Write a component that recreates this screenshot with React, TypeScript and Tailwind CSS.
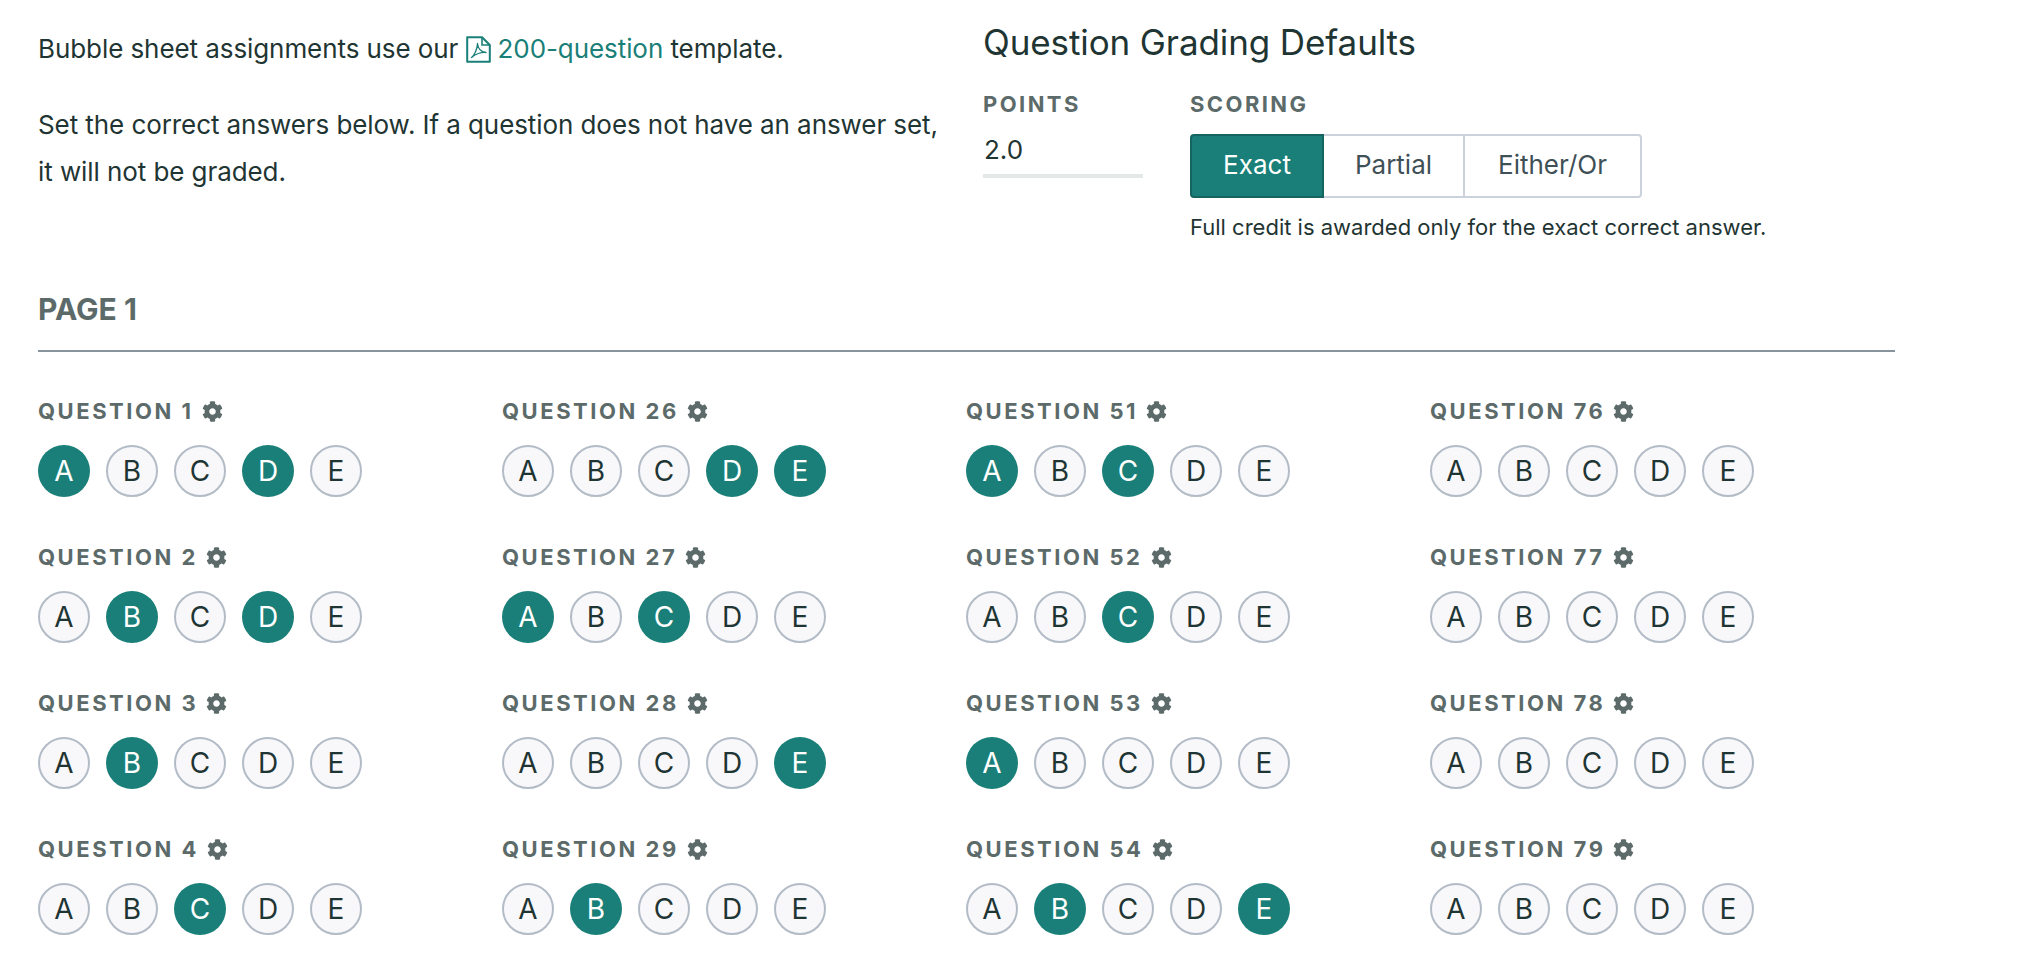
import React from "react";
import { FaCog } from "react-icons/fa";

const choices = ["A", "B", "C", "D", "E"];

const columns = [
  [
    { n: 1, on: "AD" },
    { n: 2, on: "BD" },
    { n: 3, on: "B" },
    { n: 4, on: "C" },
  ],
  [
    { n: 26, on: "DE" },
    { n: 27, on: "AC" },
    { n: 28, on: "E" },
    { n: 29, on: "B" },
  ],
  [
    { n: 51, on: "AC" },
    { n: 52, on: "C" },
    { n: 53, on: "A" },
    { n: 54, on: "BE" },
  ],
  [
    { n: 76, on: "" },
    { n: 77, on: "" },
    { n: 78, on: "" },
    { n: 79, on: "" },
  ],
];

function PdfIcon() {
  return (
    <svg
      viewBox="0 0 25 27"
      className="inline-block w-[25px] h-[27px] align-[-5px] mr-[7px]"
      fill="none"
      stroke="currentColor"
      aria-hidden="true"
    >
      <path d="M1.2 1.2H16L23.8 9V25.8H1.2Z" strokeWidth="2" strokeLinejoin="round" />
      <path d="M16 1.2V9H23.8" strokeWidth="1.6" />
      <path
        d="M5.5 21.5C8 20 11.5 13 11.5 7.5C12 12.5 15 16 20 16.5C15.5 16 9 18 5.5 21.5Z"
        strokeWidth="1.3"
        strokeLinejoin="round"
      />
    </svg>
  );
}

function Question({ n, on }: { n: number; on: string }) {
  return (
    <div className="h-[146px] pt-[1px]">
      <div className="flex items-center h-[24px] text-[22px] font-bold tracking-[0.115em] text-[#5c6b6a]">
        <span>QUESTION {n}</span>
        <FaCog className="w-[21px] h-[21px] ml-[8px]" aria-hidden="true" />
      </div>
      <div className="flex gap-4 mt-[22px]">
        {choices.map((c) =>
          on.includes(c) ? (
            <div
              key={c}
              className="w-[52px] h-[52px] rounded-full bg-[#1a7f78] text-white flex items-center justify-center text-[28px]"
            >
              {c}
            </div>
          ) : (
            <div
              key={c}
              className="w-[52px] h-[52px] rounded-full bg-[#f8f8fb] border-2 border-[#b3bcc6] text-[#1f3533] flex items-center justify-center text-[28px]"
            >
              {c}
            </div>
          )
        )}
      </div>
    </div>
  );
}

export default function App() {
  return (
    <div className="h-[980px] overflow-hidden bg-white pl-[38px] pr-[137px] text-[#1f3533] font-['Inter',sans-serif]">
      <div className="flex h-[283px]">
        <div className="w-[945px] pt-[25px] text-[26px] tracking-[-0.003em] leading-[48px]">
          <p className="h-[48px]">
            Bubble sheet assignments use our{" "}
            <a href="#" className="text-[#1a7f78]">
              <PdfIcon />200-question
            </a>{" "}
            template.
          </p>
          <p className="mt-[28px] leading-[47px] whitespace-nowrap">
            Set the correct answers below. If a question does not have an answer set,
            <br />
            it will not be graded.
          </p>
        </div>
        <div>
          <h2 className="mt-[20px] h-[44px] text-[35px] leading-[44px] tracking-[-0.003em] whitespace-nowrap">Question Grading Defaults</h2>
          <div className="flex mt-[28px]">
            <div className="w-[207px]">
              <div className="text-[22px] leading-[24px] font-bold tracking-[0.11em] text-[#5c6b6a]">POINTS</div>
              <div className="w-[160px] h-[46px] mt-[16px] border-b-4 border-[#e4e8e6] text-[26px] leading-[36px] pl-px">
                2.0
              </div>
            </div>
            <div>
              <div className="text-[22px] leading-[24px] font-bold tracking-[0.11em] text-[#5c6b6a]">SCORING</div>
              <div className="flex mt-[18px] h-[64px] w-[452px] text-[26px]">
                <div className="w-[134px] pb-[3px] rounded-l bg-[#1a7f78] border-2 border-[#14655f] text-white flex items-center justify-center">
                  Exact
                </div>
                <div className="w-[141px] pb-[3px] border-y-2 border-r-2 border-[#ccd2dc] text-[#3f5057] flex items-center justify-center">
                  Partial
                </div>
                <div className="flex-1 pb-[3px] rounded-r border-y-2 border-r-2 border-[#ccd2dc] text-[#3f5057] flex items-center justify-center">
                  Either/Or
                </div>
              </div>
              <p className="mt-[14px] text-[22px] leading-[30px] whitespace-nowrap">Full credit is awarded only for the exact correct answer.</p>
            </div>
          </div>
        </div>
      </div>

      <h3 className="h-[69px] border-b-2 border-[#86929c] text-[30px] leading-[52px] font-bold text-[#5c6b6a]">
        PAGE 1
      </h3>

      <div className="grid grid-cols-[464px_464px_464px_1fr] mt-[46px]">
        {columns.map((col, i) => (
          <div key={i}>
            {col.map((q) => (
              <Question key={q.n} n={q.n} on={q.on} />
            ))}
          </div>
        ))}
      </div>
    </div>
  );
}
